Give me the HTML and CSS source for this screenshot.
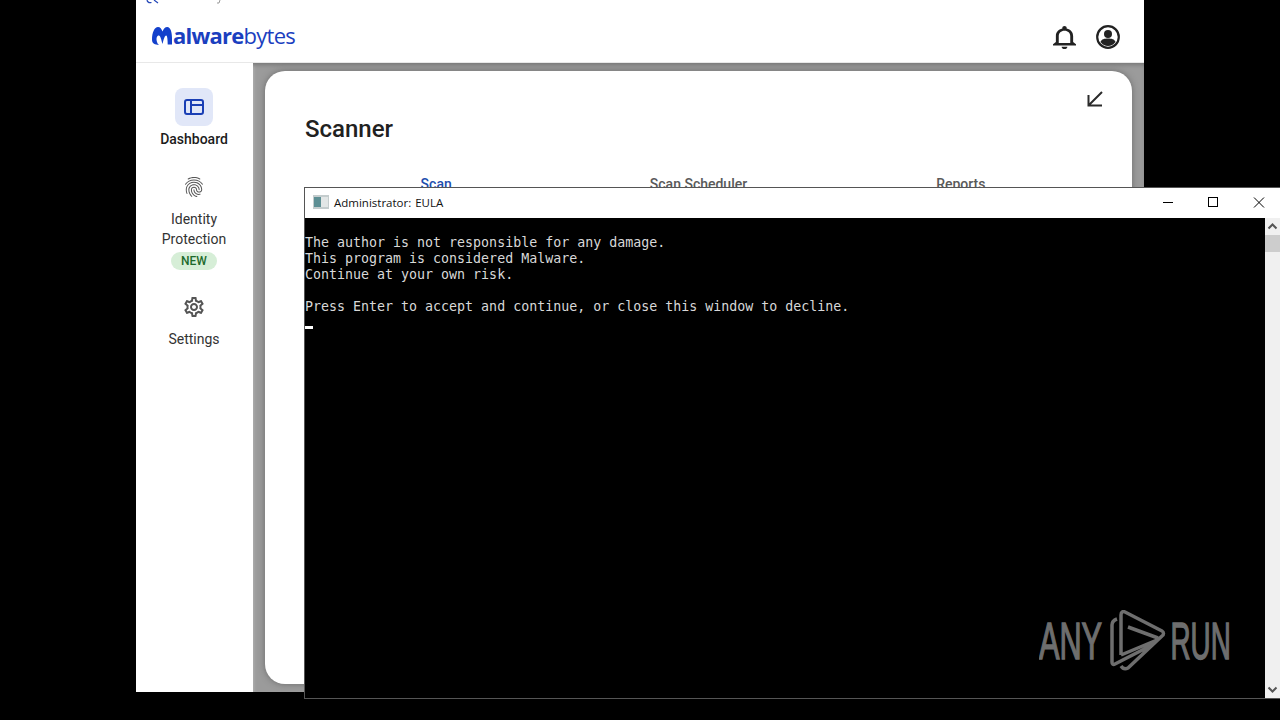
FILE: index.html
```html
<!DOCTYPE html>
<html lang="en">
<head>
<meta charset="utf-8">
<title>Malwarebytes</title>
<link rel="stylesheet" href="styles.css">
</head>
<body>
<div class="app">
  <svg class="clip-strip" viewBox="0 0 90 4"><path d="M11 0c.5 2 2.500 3 4.500 2.500M18 0l4 3" fill="none" stroke="#2447b8" stroke-width="1.200"/><path d="M84 0l-1 3h-2" fill="none" stroke="#999"/></svg>
  <header class="topbar">
    <div class="logo">
      <svg class="logo-m" viewBox="0 0 21 19"><path d="M0 12.500C0 5.500 2.500 0 6 0c2.200 0 3.500 2 4.500 4.500C11.500 2 13 0 15.300 0c3.200 0 4.700 5 4.700 11v6.500h-4.300c0-4-.3-9-1.600-9-1.300 0-2.300 3.500-3.600 8.500-1-3.500-2-8.500-3.700-8.500-1.700 0-3 2.500-1.800 6.500.3 1.200 1 2.200 2 3C3 17.500 0 17 0 12.500z"/></svg>
      <span class="logo-text"><b>alware</b>bytes</span>
    </div>
    <div class="top-icons">
      <svg class="bell" viewBox="4 2.500 16 19.500" preserveAspectRatio="none"><path d="M12 22c1.100 0 2-.9 2-2h-4c0 1.100.9 2 2 2zm6-6v-5c0-3.070-1.630-5.640-4.500-6.320V4c0-.83-.67-1.500-1.500-1.500s-1.500.67-1.500 1.500v.68C7.640 5.360 6 7.920 6 11v5l-2 2v1h16v-1l-2-2zm-2 1H8v-6c0-2.480 1.510-4.500 4-4.500s4 2.020 4 4.500v6z"/></svg>
      <svg class="user" viewBox="0 0 24 24"><circle cx="12" cy="12" r="10.800" fill="none" stroke="#222" stroke-width="2.200"/><circle cx="12" cy="9" r="4"/><path d="M4.500 17c1-3 4-3.500 7.500-3.500s6.500.5 7.500 3.500c-2 2.800-4.500 4-7.500 4s-5.500-1.200-7.500-4z"/></svg>
    </div>
  </header>
  <div class="main">
    <nav class="side">
      <div class="nav-item">
        <span class="nav-icon active"><svg viewBox="0 0 20 16"><rect x="1" y="1" width="18" height="14" rx="2" fill="none" stroke="#1a3fb5" stroke-width="2"/><path d="M7 1v14M7 6h12" fill="none" stroke="#1a3fb5" stroke-width="2"/></svg></span>
        <span class="nav-label strong">Dashboard</span>
      </div>
      <div class="nav-item">
        <span class="nav-icon"><svg class="glyph" viewBox="0 0 24 24"><path d="M17.810 4.470c-.08 0-.16-.02-.23-.06C15.660 3.420 14 3 12.010 3c-1.980 0-3.860.47-5.570 1.410-.24.13-.54.04-.68-.2-.13-.24-.04-.55.2-.68C7.820 2.520 9.860 2 12.010 2c2.130 0 3.990.47 6.030 1.520.25.13.34.43.21.67-.09.18-.26.28-.44.28zM3.500 9.720c-.1 0-.2-.03-.29-.09-.23-.16-.28-.47-.12-.7.99-1.400 2.250-2.500 3.750-3.270C9.980 4.040 14 4.030 17.150 5.650c1.500.77 2.760 1.860 3.750 3.250.16.22.11.54-.12.7-.23.16-.54.11-.7-.12-.9-1.260-2.040-2.250-3.390-2.940-2.870-1.470-6.540-1.470-9.400.01-1.360.7-2.500 1.700-3.400 2.960-.08.14-.23.21-.39.21zm6.250 12.070c-.13 0-.26-.05-.35-.15-.87-.87-1.340-1.430-2.010-2.640-.69-1.230-1.050-2.730-1.050-4.340 0-2.970 2.540-5.390 5.660-5.390s5.660 2.420 5.660 5.390c0 .28-.22.5-.5.5s-.5-.22-.5-.5c0-2.420-2.090-4.390-4.660-4.390-2.570 0-4.660 1.970-4.660 4.390 0 1.440.32 2.770.93 3.850.64 1.150 1.080 1.640 1.850 2.420.19.2.19.51 0 .71-.11.1-.24.15-.37.15zm7.170-1.850c-1.190 0-2.240-.3-3.100-.89-1.490-1.010-2.380-2.650-2.380-4.390 0-.28.22-.5.5-.5s.5.22.5.5c0 1.410.72 2.740 1.940 3.560.71.48 1.540.71 2.540.71.24 0 .64-.03 1.040-.1.27-.05.53.13.58.41.05.27-.13.53-.41.58-.57.11-1.070.12-1.210.12zM14.910 22c-.04 0-.09-.01-.13-.02-1.590-.44-2.630-1.030-3.720-2.100-1.400-1.390-2.170-3.240-2.170-5.220 0-1.620 1.380-2.940 3.080-2.940 1.700 0 3.080 1.320 3.080 2.940 0 1.070.93 1.940 2.080 1.940s2.080-.87 2.080-1.940c0-3.770-3.250-6.830-7.250-6.830-2.840 0-5.440 1.580-6.610 4.030-.39.81-.59 1.760-.59 2.800 0 .78.07 2.010.67 3.610.1.26-.03.55-.29.64-.26.1-.55-.04-.64-.29-.49-1.310-.73-2.610-.73-3.960 0-1.200.23-2.290.68-3.240 1.330-2.790 4.280-4.600 7.510-4.600 4.550 0 8.250 3.510 8.250 7.830 0 1.620-1.380 2.940-3.080 2.940s-3.080-1.320-3.080-2.940c0-1.070-.93-1.940-2.080-1.940s-2.080.87-2.080 1.940c0 1.710.66 3.310 1.870 4.510.95.94 1.860 1.460 3.270 1.850.27.07.42.35.35.61-.05.23-.26.38-.47.38z"/></svg></span>
        <span class="nav-label">Identity<br>Protection</span>
        <span class="pill">NEW</span>
      </div>
      <div class="nav-item">
        <span class="nav-icon"><svg class="glyph" viewBox="0 0 24 24"><path d="M19.430 12.980c.04-.32.07-.64.07-.98 0-.34-.03-.66-.07-.98l2.110-1.650c.19-.15.24-.42.12-.64l-2-3.460c-.09-.16-.26-.25-.44-.25-.06 0-.12.01-.17.03l-2.490 1c-.52-.4-1.080-.73-1.690-.98l-.38-2.650C14.460 2.180 14.250 2 14 2h-4c-.25 0-.46.18-.49.42l-.38 2.650c-.61.25-1.170.59-1.690.98l-2.490-1c-.06-.02-.12-.03-.18-.03-.17 0-.34.09-.43.25l-2 3.460c-.13.22-.07.49.12.64l2.110 1.650c-.04.32-.07.65-.07.98 0 .33.03.66.07.98l-2.110 1.650c-.19.15-.24.42-.12.64l2 3.460c.09.16.26.25.44.25.06 0 .12-.01.17-.03l2.490-1c.52.4 1.080.73 1.690.98l.38 2.650c.03.24.24.42.49.42h4c.25 0 .46-.18.49-.42l.38-2.650c.61-.25 1.170-.59 1.690-.98l2.490 1c.06.02.12.03.18.03.17 0 .34-.09.43-.25l2-3.460c.12-.22.07-.49-.12-.64l-2.110-1.650zm-1.980-1.710c.04.31.05.52.05.73 0 .21-.02.43-.05.73l-.14 1.130.89.7 1.080.84-.7 1.210-1.270-.51-1.040-.42-.9.68c-.43.32-.84.56-1.250.73l-1.060.43-.16 1.130-.2 1.350h-1.400l-.19-1.350-.16-1.130-1.060-.43c-.43-.18-.83-.41-1.230-.71l-.91-.7-1.060.43-1.270.51-.7-1.210 1.080-.84.89-.7-.14-1.130c-.03-.31-.05-.54-.05-.74s.02-.43.05-.73l.14-1.130-.89-.7-1.080-.84.7-1.210 1.270.51 1.040.42.9-.68c.43-.32.84-.56 1.250-.73l1.060-.43.16-1.130.2-1.350h1.390l.19 1.350.16 1.130 1.060.43c.43.18.83.41 1.230.71l.91.7 1.060-.43 1.270-.51.7 1.210-1.070.85-.89.7.14 1.130zM12 8c-2.210 0-4 1.790-4 4s1.790 4 4 4 4-1.790 4-4-1.790-4-4-4zm0 6c-1.100 0-2-.9-2-2s.9-2 2-2 2 .9 2 2-.9 2-2 2z"/></svg></span>
        <span class="nav-label">Settings</span>
      </div>
    </nav>
    <div class="panel">
      <section class="card">
        <svg class="collapse" viewBox="0 0 16 16"><path d="M15 1 2 14M1.500 4v10.500H15" fill="none" stroke="#2b2b2b" stroke-width="2"/></svg>
        <h1 class="card-title">Scanner</h1>
        <div class="tabs">
          <span class="tab on">Scan</span>
          <span class="tab">Scan Scheduler</span>
          <span class="tab">Reports</span>
        </div>
      </section>
    </div>
  </div>
</div>

<div class="console">
  <div class="titlebar">
    <svg class="con-icon" viewBox="0 0 16 14"><rect width="16" height="14" fill="#c4cccd"/><rect x="1" y="2" width="7" height="10" fill="#5d8f94"/><rect x="8" y="2" width="7" height="10" fill="#e2e6e6"/></svg>
    <span class="con-title">Administrator: EULA</span>
    <div class="win-btns">
      <svg viewBox="0 0 46 30"><path d="M19 14.500h10" stroke="#000" fill="none"/></svg>
      <svg viewBox="0 0 46 30"><rect x="18.500" y="9.500" width="9" height="9" stroke="#000" fill="none"/></svg>
      <svg viewBox="0 0 46 30"><path d="M18 9.500l10 10M28 9.500l-10 10" stroke="#000" fill="none"/></svg>
    </div>
  </div>
  <div class="con-body">
    <pre class="con-text">
The author is not responsible for any damage.
This program is considered Malware.
Continue at your own risk.

Press Enter to accept and continue, or close this window to decline.
<span class="cursor"></span></pre>
    <div class="scrollbar">
      <svg class="sb-btn" viewBox="0 0 15 17"><path d="M3.500 10.500 7.500 6.500l4 4" fill="none" stroke="#555" stroke-width="2"/></svg>
      <span class="sb-thumb"></span>
      <svg class="sb-btn sb-end" viewBox="0 0 15 17"><path d="M3.500 6.500l4 4 4-4" fill="none" stroke="#555" stroke-width="2"/></svg>
    </div>
  </div>
</div>

<svg class="watermark" viewBox="0 0 200 66">
  <text class="wm-text" transform="translate(0 49) scale(.59 1)">ANY</text>
  <text class="wm-text" transform="translate(131.500 49) scale(.535 1)">RUN</text>
  <path d="M78 9c-3 1-5 3-5 6v37c0 2 1 3 3 2l37-19M82 45V5c0-3 2-4 4-3l37 19c2 1 2 4 0 5L89 58c-2 1-5 1-7-2M89 17l30 11M82 45l36-15" fill="none" stroke="#6e6e6e" stroke-width="3.500" stroke-linejoin="round"/>
</svg>
```
FILE: styles.css
```css
* { box-sizing: border-box; }
html, body { margin: 0; height: 100%; }
body {
  width: 1280px;
  height: 720px;
  overflow: hidden;
  background: #000;
  font-family: Roboto, "Liberation Sans", sans-serif;
  position: relative;
}
svg { display: block; }

.app {
  position: absolute;
  left: 136px;
  top: 0;
  width: 1008px;
  height: 692px;
  background: #fff;
  display: flex;
  flex-direction: column;
}
.clip-strip { position: absolute; left: 0; top: 0; width: 90px; height: 4px; }
.topbar {
  height: 63px;
  flex: none;
  border-bottom: 1px solid #e8e8e8;
  display: flex;
  align-items: center;
  justify-content: space-between;
  padding: 12px 24px 0 16px;
}
.logo { display: flex; align-items: center; height: 26px; color: #1b3fbf; }
.logo-m { width: 21px; height: 19px; fill: #1340cc; flex: none; margin-top: -2px; }
.logo-text {
  font-family: "Open Sans", sans-serif;
  font-size: 22px;
  line-height: 26px;
  letter-spacing: -0.75px;
  font-weight: 400;
  margin-top: -4px;
}
.logo-text b { font-weight: 700; }
.top-icons { display: flex; align-items: center; gap: 20px; }
.bell { width: 23px; height: 23px; fill: #222; }
.user { width: 24px; height: 24px; fill: #222; }

.main { flex: 1; display: flex; min-height: 0; }
.side {
  width: 117px;
  flex: none;
  padding: 25px 1px 0 0;
  display: flex;
  flex-direction: column;
  gap: 19px;
  align-items: center;
  text-align: center;
}
.nav-item { display: flex; flex-direction: column; align-items: center; }
.nav-icon {
  width: 38px;
  height: 38px;
  border-radius: 8px;
  display: flex;
  align-items: center;
  justify-content: center;
}
.nav-icon.active { background: #e1e7f8; }
.nav-icon.active svg { width: 20px; height: 16px; }
.glyph { width: 24px; height: 24px; fill: #555; }
.nav-label { margin-top: 3px; font-size: 14px; line-height: 20px; color: #333; }
.nav-label.strong { color: #1c1c1c; font-weight: 500; }
.pill {
  margin: 3px 0 -1px;
  width: 46px;
  height: 18px;
  border-radius: 9px;
  background: #d6eed7;
  color: #1d6a2c;
  font-size: 12px;
  font-weight: 500;
  line-height: 18px;
}

.panel {
  flex: 1;
  min-width: 0;
  background: #9b9b9b;
  padding: 8px 12px 8px 12px;
  box-shadow: inset 0 4px 4px -2px #777, inset 3px 0 3px -2px #bbb;
}
.card {
  position: relative;
  height: 100%;
  background: #fff;
  border-radius: 20px;
  padding: 40px 40px 0;
  overflow: hidden;
  box-shadow: 0 0 6px rgba(60, 60, 60, .5);
}
.collapse { position: absolute; top: 20px; right: 29px; width: 16px; height: 16px; }
.card-title { margin: 0; font-size: 24px; line-height: 36px; font-weight: 500; color: #212121; }
.tabs { display: flex; margin-top: 27px; width: 787px; }
.tab {
  flex: 1;
  text-align: center;
  font-size: 14px;
  line-height: 20px;
  font-weight: 500;
  color: #5a5a5a;
}
.tab.on { color: #1f4fae; }

.console {
  position: absolute;
  left: 304px;
  top: 187px;
  width: 976px;
  height: 512px;
  background: #000;
  border: 1px solid #555;
  border-right: 0;
  display: flex;
  flex-direction: column;
}
.titlebar {
  height: 30px;
  flex: none;
  background: #fff;
  display: flex;
  align-items: center;
  padding-left: 8px;
}
.con-icon { width: 16px; height: 14px; margin-top: -2px; }
.con-title {
  margin: -2px 0 0 5px;
  font-family: "Open Sans", sans-serif;
  font-size: 11.5px;
  word-spacing: 1px;
  color: #111;
}
.win-btns { margin-left: auto; display: flex; transform: translateX(2px); }
.win-btns svg { width: 46px; height: 30px; }
.con-body { flex: 1; display: flex; min-height: 0; }
.con-text {
  flex: 1;
  margin: 0;
  padding-top: 17px;
  font-family: "DejaVu Sans Mono", monospace;
  font-size: 13.3px;
  line-height: 16px;
  color: #d8d8d8;
}
.cursor {
  display: inline-block;
  width: 8px;
  height: 3px;
  background: #fff;
  vertical-align: -2px;
}
.scrollbar {
  width: 15px;
  flex: none;
  background: #f0f0f0;
  display: flex;
  flex-direction: column;
}
.sb-btn { width: 15px; height: 17px; flex: none; }
.sb-thumb { height: 17px; background: #cdcdcd; flex: none; }
.sb-end { margin-top: auto; }

.watermark { position: absolute; left: 1039px; top: 610px; width: 200px; height: 66px; }
.wm-text {
  font-family: "Liberation Sans", sans-serif;
  font-size: 52px;
  fill: #6e6e6e;
  stroke: #6e6e6e;
  stroke-width: 1.500;
}
```
